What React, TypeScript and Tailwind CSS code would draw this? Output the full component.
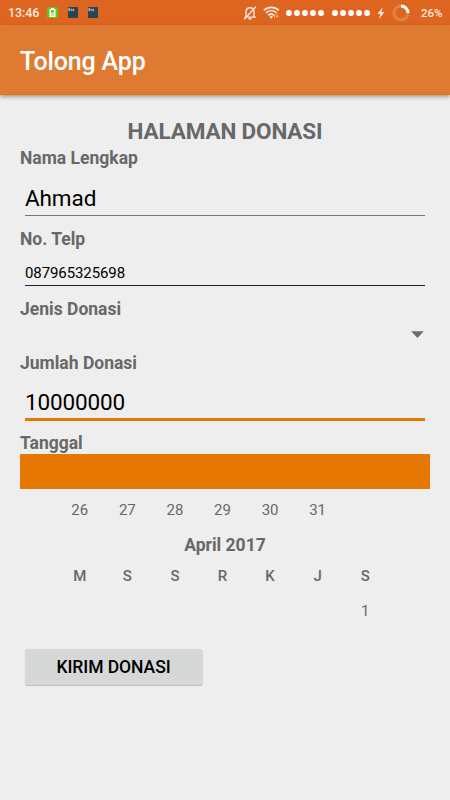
import { clsx } from 'clsx';

interface FieldLabelProps {
  children: string;
  className?: string;
}

interface TextFieldProps {
  id: string;
  type?: string;
  defaultValue: string;
  className?: string;
}

const marchDays = ['26', '27', '28', '29', '30', '31', ''];
const weekdays = ['M', 'S', 'S', 'R', 'K', 'J', 'S'];
const aprilDays = ['', '', '', '', '', '', '1'];

function BatteryAppIcon() {
  return (
    <svg className="h-[11px] w-[11px]" viewBox="0 0 11 11">
      <rect width="11" height="11" rx="1.5" fill="#62c51d" />
      <path d="M4 1h3v1h1.5v8h-6V2H4z" fill="#fff" />
      <rect x="4" y="3.2" width="3" height="2.4" fill="#62c51d" />
      <rect x="4" y="5.600" width="3" height="3" fill="#b5e594" />
    </svg>
  );
}

function TerminalAppIcon() {
  return (
    <svg className="h-[11px] w-[10px]" viewBox="0 0 10 11">
      <rect width="10" height="11" rx="0.5" fill="#2c4450" />
      <path d="M2.2 1.4H.9v2.4h1.3M.9 2.6H2M3 3.7V2.3h.9v1.4M6.2 2.3H5v1.4h1.2" fill="none" stroke="#dce5e8" strokeWidth="0.7" />
    </svg>
  );
}

function SilentIcon() {
  return (
    <svg className="h-[14px] w-[14px]" viewBox="0 0 14 14" fill="none" stroke="#fde9dd" strokeWidth="1.4">
      <path d="M1.4 11.1h11.4M3 11V6c0-2.5 1.5-4.2 4-4.2S11 3.5 11 6v5M5.6 12.7h2.8M12.9 .7 1.3 13.3" />
    </svg>
  );
}

function WifiIcon() {
  return (
    <svg className="h-[13px] w-[17px]" viewBox="0 0 17 13" fill="none">
      <g stroke="#fde9dd" strokeWidth="1.7">
        <path d="M.8 4.4c4.4-4 10.7-4 15 0M3 6.9c3.2-2.9 7.5-2.9 10.6 0M5.2 9.3c1.8-1.6 4.1-1.6 5.9 0" />
      </g>
      <path d="M6.3 10.7c1.1-.8 2.6-.8 3.7 0l-1.8 2z" fill="#fde9dd" />
      <path d="M11.4 11.9V8.3M10.3 9.4l1.1-1.2 1.1 1.2M14.2 7.6v3.6M13.1 10.1l1.1 1.2 1.1-1.2" stroke="#f0b18d" />
    </svg>
  );
}

function SignalDots() {
  return (
    <svg className="h-[6px] w-[38px]" viewBox="0 0 38 6" fill="#fff">
      <circle cx="3" cy="3" r="3" />
      <circle cx="11" cy="3" r="3" />
      <circle cx="19" cy="3" r="3" />
      <circle cx="27" cy="3" r="3" />
      <circle cx="35" cy="3" r="3" />
    </svg>
  );
}

function StatusBar() {
  return (
    <div className="flex h-[25px] items-center bg-[#dd6520] text-[#fde9dd]">
      <span className="ml-2 w-[39px] text-[12.5px] leading-4 font-medium tracking-[-0.1px]">13:46</span>
      <BatteryAppIcon />
      <div className="ml-[10px] flex gap-[10px]">
        <TerminalAppIcon />
        <TerminalAppIcon />
      </div>
      <div className="ml-auto flex items-center pr-2">
        <SilentIcon />
        <div className="ml-[6px]">
          <WifiIcon />
        </div>
        <div className="ml-[6px] flex gap-[8px]">
          <SignalDots />
          <SignalDots />
        </div>
        <svg className="ml-[7px] h-[12px] w-[8px]" viewBox="0 0 8 12" fill="#fde9dd">
          <path d="M5.8 0 .4 6.9l3-.2L1.9 12l5.7-7.1-3.2.2z" />
        </svg>
        <svg className="ml-[7px] h-[18px] w-[18px]" viewBox="0 0 18 18" fill="none" strokeWidth="3">
          <circle cx="9" cy="9" r="7" stroke="#e2804a" />
          <path d="M9 2a7 7 0 0 1 7 7" stroke="#fff" />
        </svg>
        <span className="ml-[11px] w-[21px] text-[11.5px] leading-4 font-medium whitespace-nowrap">26%</span>
      </div>
    </div>
  );
}

function FieldLabel({ children, className }: FieldLabelProps) {
  return (
    <div className={clsx('h-5 text-[17.5px] leading-5 font-bold text-[#686868]', className)}>
      {children}
    </div>
  );
}

function TextField({ id, type = 'text', defaultValue, className }: TextFieldProps) {
  return (
    <input
      id={id}
      type={type}
      defaultValue={defaultValue}
      className={clsx('mx-[5px] block w-[400px] bg-transparent text-black outline-none', className)}
    />
  );
}

function WeekRow({ cells, className }: { cells: string[]; className?: string }) {
  return (
    <div className={clsx('ml-[36px] grid w-[333px] grid-cols-7 text-center text-[15px] leading-5 text-[#686868]', className)}>
      {cells.map((cell, i) => (
        <span key={i} className="h-5">{cell}</span>
      ))}
    </div>
  );
}

export default function App() {
  return (
    <div className="h-[800px] w-[450px] overflow-hidden bg-[#eeeeee] font-[Roboto,sans-serif]">
      <StatusBar />
      <header className="flex h-[70px] items-center border-b border-[#e67700] bg-[#de7a32] px-5 pt-[5px] shadow-[0_2px_4px_rgba(0,0,0,0.35)]">
        <h1 className="text-[25px] leading-8 font-medium tracking-[-0.15px] text-white">Tolong App</h1>
      </header>

      <main className="px-5 pt-[23px]">
        <h2 className="h-[30px] text-center text-[22.5px] leading-[26px] font-bold tracking-[-0.15px] text-[#686868]">HALAMAN DONASI</h2>

        <FieldLabel>Nama Lengkap</FieldLabel>
        <TextField id="nama" defaultValue="Ahmad" className="mt-[14px] h-[34px] border-b border-[#757575] pb-[1px] text-[22.5px] tracking-[-0.1px]" />

        <FieldLabel className="mt-[13px]">No. Telp</FieldLabel>
        <TextField id="telp" type="tel" defaultValue="087965325698" className="mt-[12px] h-[25px] border-b border-[#222222] text-[15px] tracking-[-0.1px]" />

        <FieldLabel className="mt-[13px]">Jenis Donasi</FieldLabel>
        <button type="button" aria-label="Jenis Donasi" className="flex h-[34px] w-full items-center justify-end pr-[6px] pb-[3px]">
          <svg className="h-[7px] w-[13px]" viewBox="0 0 13 7" fill="#6c6c6c">
            <path d="M.2.2h12.6L6.5 6.9z" />
          </svg>
        </button>

        <FieldLabel>Jumlah Donasi</FieldLabel>
        <TextField id="jumlah" defaultValue="10000000" className="mt-[13px] h-[35px] border-b-[3px] border-[#e67700] text-[22.5px] tracking-[-0.15px]" />

        <FieldLabel className="mt-[12px]">Tanggal</FieldLabel>
        <div className="mt-px h-[35px] bg-[#e67700]" />

        <WeekRow cells={marchDays} className="mt-[11px]" />
        <div className="mt-[15px] text-center text-[17.5px] leading-5 font-bold text-[#686868]">April 2017</div>
        <WeekRow cells={weekdays} className="mt-[11px] font-medium" />
        <WeekRow cells={aprilDays} className="mt-[15px]" />

        <button
          type="button"
          className="mt-[28px] ml-[4.5px] block h-[36px] w-[178px] rounded-[3px] bg-[#d6d8d7] text-[17.5px] font-medium tracking-[-0.05px] text-black shadow-[0_1px_1px_rgba(0,0,0,0.2)]"
        >
          KIRIM DONASI
        </button>
      </main>
    </div>
  );
}
